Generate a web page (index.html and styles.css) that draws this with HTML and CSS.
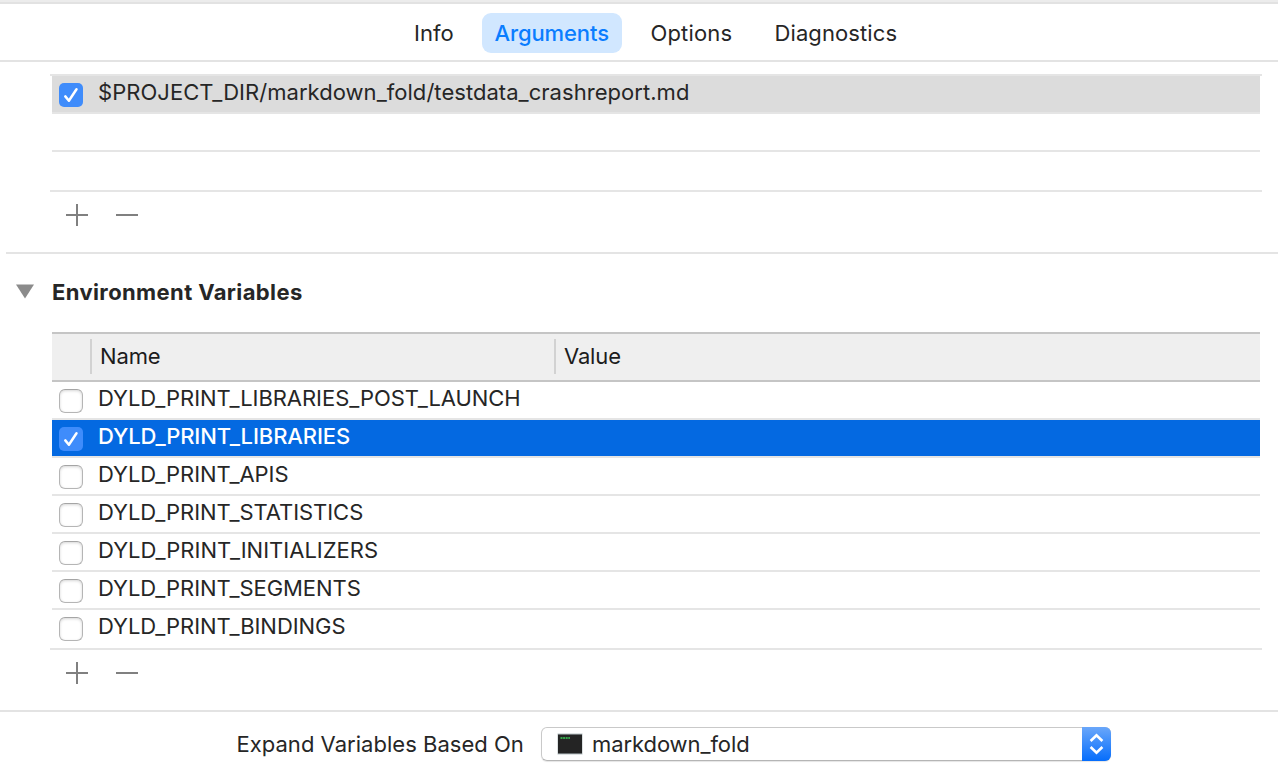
FILE: index.html
```html
<!DOCTYPE html>
<html lang="en">
<head>
<meta charset="utf-8">
<title>Scheme Arguments</title>
<link rel="stylesheet" href="styles.css">
</head>
<body>
<main class="panel">
  <nav class="tabs">
    <a class="tab tab-info"><span>Info</span></a>
    <a class="tab tab-arguments active"><span>Arguments</span></a>
    <a class="tab tab-options"><span>Options</span></a>
    <a class="tab tab-diagnostics"><span>Diagnostics</span></a>
  </nav>

  <section class="launch">
    <div class="list">
      <div class="row muted"><i class="check on"><svg viewBox="0 0 24 24"><path d="M6.3 13.4 9.9 17.7 17.5 6.3"/></svg></i><span class="path">$PROJECT_DIR/markdown_fold/testdata_crashreport.md</span></div>
      <div class="row"></div>
      <div class="row last"></div>
    </div>
    <div class="actions">
      <svg viewBox="0 0 22 22"><path d="M0 11H22M11 0V22"/></svg>
      <svg viewBox="0 0 22 22"><path d="M0 11H22"/></svg>
    </div>
  </section>

  <section class="environment">
    <h2><svg viewBox="0 0 18 14"><path d="M0 0H18L9 14Z"/></svg><span>Environment Variables</span></h2>
    <div class="columns"><span class="col-check"></span><span class="col-name">Name</span><span class="col-value">Value</span></div>
    <div class="list variables">
      <div class="row"><i class="check"></i><span>DYLD_PRINT_LIBRARIES_POST_LAUNCH</span></div>
      <div class="row selected"><i class="check on"><svg viewBox="0 0 24 24"><path d="M6.3 13.4 9.9 17.7 17.5 6.3"/></svg></i><span>DYLD_PRINT_LIBRARIES</span></div>
      <div class="row"><i class="check"></i><span>DYLD_PRINT_APIS</span></div>
      <div class="row"><i class="check"></i><span>DYLD_PRINT_STATISTICS</span></div>
      <div class="row"><i class="check"></i><span class="initializers">DYLD_PRINT_INITIALIZERS</span></div>
      <div class="row"><i class="check"></i><span>DYLD_PRINT_SEGMENTS</span></div>
      <div class="row last"><i class="check"></i><span>DYLD_PRINT_BINDINGS</span></div>
    </div>
    <div class="actions">
      <svg viewBox="0 0 22 22"><path d="M0 11H22M11 0V22"/></svg>
      <svg viewBox="0 0 22 22"><path d="M0 11H22"/></svg>
    </div>
  </section>

  <footer class="expand">
    <span class="label">Expand Variables Based On</span>
    <div class="select">
      <svg class="terminal" viewBox="0 0 26 22"><rect x=".5" y=".5" width="25" height="21" fill="#b9c3c6"/><rect x="1" y="1.5" width="24" height="19" fill="#242424"/><path d="M3.5 5H13" stroke="#35a64b" stroke-width="2" stroke-dasharray="2 .6"/></svg>
      <span class="target">markdown_fold</span>
      <span class="stepper"><svg viewBox="0 0 29 34"><path d="M8.6 14 14.5 8.3 20.4 14M8.6 20 14.5 25.7 20.4 20"/></svg></span>
    </div>
  </footer>
</main>
</body>
</html>
```

FILE: styles.css
```css
* { box-sizing: border-box; }
body { margin: 0; background: #fff; color: #262626; font: 22px/32px Inter, "Liberation Sans", sans-serif; }
svg { display: block; }
.panel { width: 1278px; height: 768px; overflow: hidden; border-top: 2px solid #ececec; white-space: nowrap; }

.tabs { height: 60px; border-top: 2px solid #e2e2e2; border-bottom: 2px solid #e3e3e3; display: flex; padding: 9px 0 0 401px; }
.tab { height: 40px; line-height: 40px; border-radius: 9px; padding-left: 13px; }
.tab-info { width: 81px; }
.tab-arguments { width: 140px; letter-spacing: -.1px; }
.tab-options { width: 124px; margin-left: 16px; padding-left: 12.5px; letter-spacing: .15px; }
.tab-diagnostics { width: 160px; padding-left: 12.5px; letter-spacing: .1px; }
.tab.active { background: #d1e7ff; color: #0a7dff; font-weight: 500; padding-left: 12.4px; }

.launch { height: 192px; padding-top: 12px; margin-left: 6px; border-bottom: 2px solid #e4e4e4; }
.launch .list { border-top: 2px solid #e5e5e5; margin-left: 44px; }
.list { width: 1212px; padding: 0 2px; margin-left: 50px; border-bottom: 2px solid #e5e5e5; }
.row { height: 38px; border-bottom: 2px solid #e5e5e5; display: flex; padding-left: 7px; }
.row.last { border-bottom: 0; }
.row.muted { background: #dcdcdc; }
.row.selected { background: #0469e1; color: #fff; }
.row span { margin-left: 15px; letter-spacing: -.05px; }
.row .path { letter-spacing: .045px; }
.row .initializers { letter-spacing: 0; }
.row.selected span { font-weight: 500; letter-spacing: -.11px; }
.check { flex: none; width: 24px; height: 24px; margin-top: 7px; border-radius: 6px; border: 1px solid #b5b5b5; border-top-color: #a5a5a5; background: #fff; box-shadow: inset 0 1px 3px #d6d6d6; }
.check.on { border: 0; box-shadow: none; background: #3f8cfb; border-radius: 5px; }
.check path { fill: none; stroke: #fff; stroke-width: 2.5; stroke-linecap: round; stroke-linejoin: round; }
.actions { display: flex; gap: 28px; padding: 12px 0 0 66px; }
.launch .actions { padding-left: 60px; }
.actions svg { width: 22px; height: 22px; }
.actions path { stroke: #808080; stroke-width: 2; }

.environment { height: 458px; border-bottom: 2px solid #e3e3e3; }
h2 { margin: 0; height: 78px; padding: 22px 0 0 16px; display: flex; font-size: 22px; font-weight: 700; letter-spacing: .38px; }
h2 svg { width: 18px; height: 15px; margin: 8px 18px 0 0; fill: #8b8b8b; }
.columns { width: 1208px; height: 50px; margin-left: 52px; background: #efefef; border: solid #c5c5c5; border-width: 2px 0; padding: 5px 0; display: flex; line-height: 34px; color: #1c1c1c; letter-spacing: -.15px; }
.col-check { width: 38px; }
.col-name, .col-value { border-left: 2px solid #d2d2d2; padding-left: 8px; height: 35px; }
.col-name { width: 464px; }

.expand { height: 56px; padding: 15px 0 0 236.5px; display: flex; line-height: 34px; }
.label { width: 304.5px; letter-spacing: .025px; }
.select { width: 570px; height: 34px; display: flex; border: 1px solid #c9c9c9; border-bottom-color: #b5b5b5; border-radius: 6px; box-shadow: 0 1px 1px #e5e5e5; line-height: 32px; }
.terminal { width: 26px; height: 22px; margin: 5px 0 0 15px; }
.target { margin-left: 9px; flex: 1; letter-spacing: -.08px; }
.stepper { width: 29px; height: 34px; margin: -1px -1px 0 0; border-radius: 0 6px 6px 0; background: linear-gradient(#6aa7fa, #056dfc); }
.stepper path { fill: none; stroke: #fff; stroke-width: 2.6; }
```
